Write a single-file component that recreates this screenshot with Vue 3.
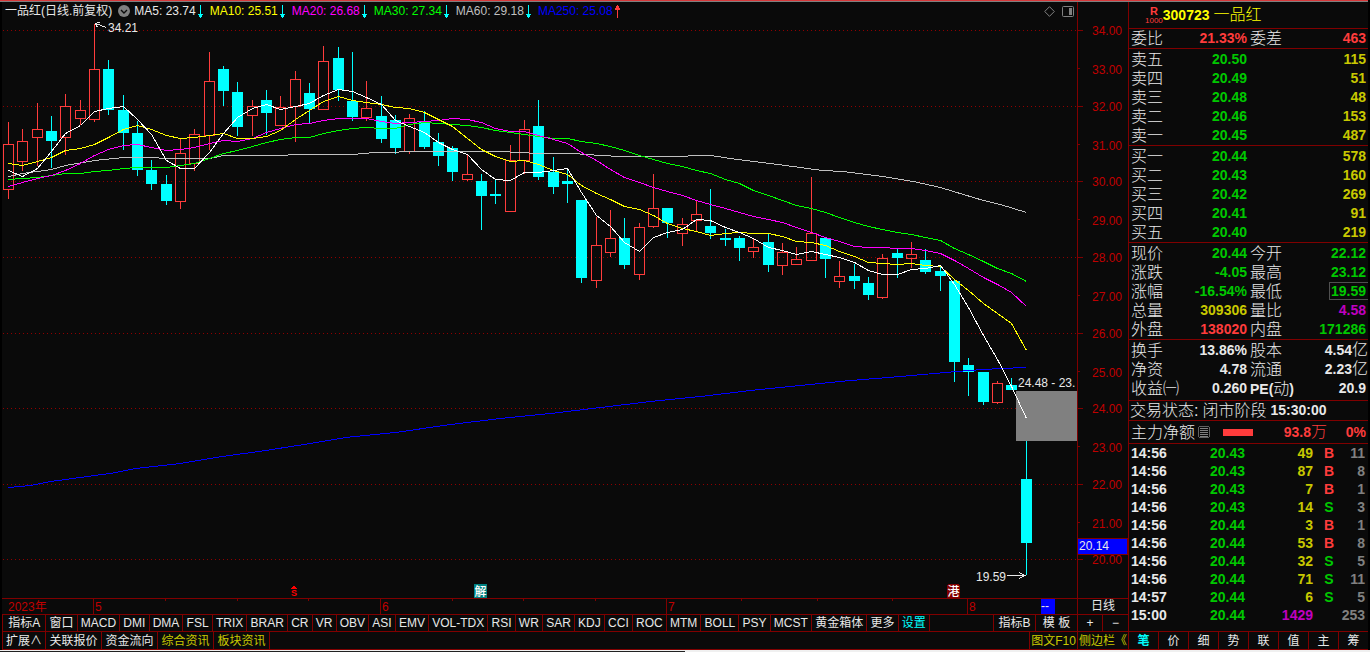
<script setup>
// Each candle: direction (u = up, d = down), high, body top, body bottom, low
const candleData = [
  ['u', 122, 144, 190, 199], ['u', 129, 141, 162, 171], ['u', 103, 129, 138, 166], ['d', 116, 131, 141, 168],
  ['u', 94, 106, 138, 155], ['u', 100, 110, 119, 125], ['u', 24, 69, 120, 122], ['d', 60, 69, 110, 115],
  ['d', 95, 110, 133, 150], ['d', 121, 133, 170, 176], ['d', 160, 170, 184, 190], ['d', 175, 184, 201, 205],
  ['u', 138, 153, 202, 209], ['u', 129, 134, 164, 171], ['u', 52, 81, 136, 150], ['d', 66, 69, 91, 106],
  ['d', 82, 92, 127, 136], ['u', 100, 106, 116, 136], ['d', 90, 100, 113, 135], ['u', 96, 107, 126, 126],
  ['u', 71, 79, 107, 142], ['d', 83, 93, 109, 123], ['u', 46, 61, 110, 110], ['d', 47, 58, 90, 101],
  ['d', 52, 101, 117, 121], ['u', 81, 108, 118, 121], ['d', 96, 116, 139, 143], ['d', 115, 120, 148, 154],
  ['u', 114, 118, 152, 154], ['d', 111, 122, 147, 149], ['d', 133, 142, 156, 166], ['d', 146, 148, 172, 181],
  ['u', 155, 174, 180, 181], ['d', 174, 181, 196, 230], ['d', 179, 194, 196, 204], ['u', 145, 160, 212, 212],
  ['u', 120, 129, 161, 174], ['d', 100, 126, 177, 180], ['d', 157, 172, 187, 194], ['d', 169, 181, 184, 203],
  ['d', 200, 200, 278, 283], ['u', 217, 245, 281, 288], ['u', 210, 238, 253, 257], ['d', 218, 238, 265, 269],
  ['u', 223, 227, 275, 280], ['u', 174, 208, 227, 228], ['d', 208, 208, 223, 238], ['u', 218, 224, 234, 246],
  ['u', 200, 214, 221, 231], ['d', 189, 226, 233, 239], ['d', 229, 238, 240, 246], ['d', 236, 238, 248, 261],
  ['u', 238, 247, 252, 258], ['d', 234, 242, 265, 272], ['u', 243, 252, 266, 275], ['u', 247, 259, 265, 265],
  ['u', 177, 233, 261, 261], ['d', 238, 238, 259, 278], ['u', 261, 276, 282, 288], ['d', 264, 276, 281, 289],
  ['d', 277, 283, 295, 300], ['u', 254, 258, 298, 299], ['d', 249, 253, 258, 278], ['u', 242, 254, 259, 268],
  ['d', 249, 260, 272, 274], ['d', 266, 271, 276, 291], ['d', 279, 281, 362, 382], ['d', 358, 365, 372, 396],
  ['d', 372, 372, 402, 405], ['u', 381, 383, 403, 404], ['d', 378, 385, 390, 390], ['d', 441, 479, 543, 575],
]
const centre = (i) => Math.round(8 + (i * 43) / 3)
const candles = candleData.map(([dir, high, top, bottom, low], i) => ({ dir, high, top, bottom, low, x: centre(i) }))

const linePoints = (ys) => ys.map((y, i) => `${centre(i) + 0.5},${y + 0.5}`).join(' ')
const sparsePoints = (pairs) => pairs.map(([x, y]) => `${x + 0.5},${y + 0.5}`).join(' ')
const ma5 = linePoints([170, 176, 168, 151, 133, 125, 111, 108, 106, 119, 134, 160, 168, 168, 152, 133, 117, 108, 104, 109, 106, 103, 95, 89, 91, 97, 104, 120, 126, 132, 142, 149, 154, 169, 179, 180, 172, 172, 170, 168, 192, 215, 226, 242, 251, 237, 232, 229, 219, 220, 227, 232, 238, 247, 250, 254, 251, 254, 257, 262, 270, 274, 274, 269, 268, 265, 284, 307, 335, 359, 386, 418])
const ma10 = linePoints([163, 165, 161, 157, 150, 148, 144, 137, 129, 125, 129, 135, 138, 137, 135, 133, 138, 138, 136, 130, 119, 110, 101, 96, 100, 102, 104, 107, 108, 112, 119, 126, 138, 149, 156, 161, 160, 164, 170, 174, 185, 193, 199, 206, 209, 215, 223, 228, 231, 235, 233, 232, 233, 233, 236, 241, 242, 245, 251, 256, 262, 263, 264, 263, 265, 266, 279, 290, 303, 313, 323, 350])
const ma20 = linePoints([186, 182, 178, 175, 170, 163, 155, 149, 145, 144, 147, 150, 149, 147, 143, 140, 141, 138, 132, 128, 124, 123, 120, 118, 118, 118, 121, 123, 122, 121, 120, 118, 119, 122, 128, 131, 131, 135, 139, 143, 152, 160, 169, 177, 182, 187, 191, 195, 200, 204, 208, 212, 216, 219, 222, 227, 232, 237, 241, 246, 247, 247, 248, 248, 250, 253, 260, 268, 277, 284, 292, 306])
const ma30 = linePoints([179, 178, 177, 175, 173, 173, 171, 170, 168, 167, 167, 167, 165, 163, 158, 153, 150, 146, 142, 139, 137, 137, 133, 130, 128, 127, 128, 128, 124, 122, 123, 124, 125, 127, 130, 132, 134, 136, 138, 138, 141, 143, 146, 150, 155, 159, 163, 166, 170, 173, 179, 183, 190, 195, 200, 205, 208, 212, 217, 222, 226, 229, 232, 234, 237, 240, 248, 254, 261, 268, 273, 281])
const ma60 = sparsePoints([[8, 176], [22, 173], [51, 169], [65, 165], [94, 160], [123, 157], [151, 157], [165, 158], [209, 158], [223, 155], [280, 155], [295, 154], [352, 154], [374, 152], [424, 151], [500, 151], [538, 153], [572, 153], [600, 155], [620, 156], [680, 156], [696, 155], [710, 155], [737, 159], [785, 165], [822, 170], [843, 171], [882, 176], [913, 181], [940, 187], [953, 191], [983, 200], [1000, 204], [1026, 212]])
const ma250 = sparsePoints([[8, 487], [30, 485], [50, 481], [65, 479], [94, 475], [110, 473], [135, 468], [180, 463], [215, 457], [265, 450], [310, 443], [345, 437], [395, 432], [450, 424], [500, 418], [550, 413], [600, 407], [650, 401], [700, 396], [750, 390], [800, 385], [850, 380], [900, 376], [945, 372], [968, 370], [1000, 368], [1026, 367]])

const prices = [
  ['34.00', 30], ['33.00', 68], ['32.00', 106], ['31.00', 144], ['30.00', 181], ['29.00', 219], ['28.00', 257], ['27.00', 295],
  ['26.00', 333], ['25.00', 371], ['24.00', 408], ['23.00', 446], ['22.00', 484], ['21.00', 522], ['20.00', 559],
].map(([label, y], i) => ({ label, y, major: i % 2 === 0 }))

const months = [[93, '5'], [380, '6'], [666, '7'], [967, '8']]
const weekTicks = [165, 237, 308, 452, 523, 595, 741, 817, 892]

const averages = [
  ['MA5: 23.74', 'white', false], ['MA10: 25.51', 'bright-yellow', false], ['MA20: 26.68', 'bright-magenta', false],
  ['MA30: 27.34', 'bright-green', false], ['MA60: 29.18', 'silver', false], ['MA250: 25.08', 'blue', true],
]

const indicators = ['窗口', 'MACD', 'DMI', 'DMA', 'FSL', 'TRIX', 'BRAR', 'CR', 'VR', 'OBV', 'ASI', 'EMV', 'VOL-TDX', 'RSI', 'WR', 'SAR', 'KDJ', 'CCI', 'ROC', 'MTM', 'BOLL', 'PSY', 'MCST', '黄金箱体', '更多']

const sells = [['卖五', '20.50', '115'], ['卖四', '20.49', '51'], ['卖三', '20.48', '48'], ['卖二', '20.46', '153'], ['卖一', '20.45', '487']]
const buys = [['买一', '20.44', '578'], ['买二', '20.43', '160'], ['买三', '20.42', '269'], ['买四', '20.41', '91'], ['买五', '20.40', '219']]
const stats = [
  ['现价', '20.44', 'green', '今开', '22.12', 'green'],
  ['涨跌', '-4.05', 'green', '最高', '23.12', 'green'],
  ['涨幅', '-16.54%', 'green', '最低', '19.59', 'green boxed'],
  ['总量', '309306', 'yellow', '量比', '4.58', 'magenta'],
  ['外盘', '138020', 'red', '内盘', '171286', 'green'],
]
const trades = [
  ['14:56', '20.43', '49', 'B', '11'], ['14:56', '20.43', '87', 'B', '8'], ['14:56', '20.43', '7', 'B', '1'],
  ['14:56', '20.43', '14', 'S', '3'], ['14:56', '20.44', '3', 'B', '1'], ['14:56', '20.44', '53', 'B', '8'],
  ['14:56', '20.44', '32', 'S', '5'], ['14:56', '20.44', '71', 'S', '11'], ['14:57', '20.44', '6', 'S', '5'],
  ['15:00', '20.44', '1429', '', '253'],
]
const tabs = ['笔', '价', '细', '势', '联', '值', '主', '筹']
</script>

<template>
  <div class="app" lang="zh-CN">
    <div class="topline"></div>
    <div class="main">
      <main class="left">
        <header class="chart-head">
          <div class="legend">
            <h1>一品红(日线.前复权)</h1>
            <button class="icon-btn toggle" type="button" aria-label="展开">
              <svg width="12" height="12" viewBox="0 0 12 12"><circle cx="6" cy="6" r="6" fill="#808080" /><path d="M3 5l3 3 3-3" fill="none" stroke="#0a0a0a" stroke-width="1.4" /></svg>
            </button>
            <span v-for="[text, tone, up] in averages" :key="text" class="avg" :class="tone">
              {{ text }}
              <svg v-if="up" width="5" height="13" viewBox="0 0 5 13" shape-rendering="crispEdges"><path d="M2 0h1v13h-1zM1 1h3v2h-3zM0 3h5v2h-5z" fill="#ff3c3c" /></svg>
              <svg v-else width="5" height="13" viewBox="0 0 5 13" shape-rendering="crispEdges"><path d="M2 0h1v13h-1zM0 9h5v1h-5zM1 10h3v2h-3z" fill="#00ffff" /></svg>
            </span>
            <span class="spacer"></span>
            <button class="icon-btn" type="button" aria-label="标记">
              <svg width="11" height="11" viewBox="0 0 11 11"><path d="M5.500 .7L10.300 5.500 5.500 10.300 .7 5.500z" fill="none" stroke="#808080" /></svg>
            </button>
            <button class="icon-btn panel-toggle" type="button" aria-label="侧栏">
              <svg width="12" height="11" viewBox="0 0 12 11"><rect x=".5" y=".5" width="11" height="10" rx="1" fill="none" stroke="#808080" /><rect x="7" y="2" width="3" height="7" fill="#808080" /></svg>
            </button>
          </div>
          <div class="axis-head"></div>
        </header>

        <svg class="plot" viewBox="2 20 1126 578" preserveAspectRatio="xMaxYMin meet" role="img" aria-label="日线图">
          <g shape-rendering="crispEdges">
            <template v-for="p in prices" :key="p.label">
              <line v-if="p.major" x1="3" x2="1077" :y1="p.y + 0.5" :y2="p.y + 0.5" class="grid" />
              <rect x="1078" :y="p.y" :width="p.major ? 5 : 2" height="1" fill="#800000" />
            </template>
            <rect x="1077" y="20" width="1" height="578" fill="#800000" />

            <g v-for="c in candles" :key="c.x">
              <template v-if="c.dir === 'd'">
                <rect :x="c.x" :y="c.high" width="1" :height="c.low - c.high" fill="#00ffff" />
                <rect :x="c.x - 5" :y="c.top" width="11" :height="c.bottom - c.top" fill="#00ffff" />
              </template>
              <template v-else>
                <rect :x="c.x" :y="c.high" width="1" :height="c.top - c.high" fill="#ff3c3c" />
                <rect :x="c.x" :y="c.bottom" width="1" :height="c.low - c.bottom" fill="#ff3c3c" />
                <rect :x="c.x - 4.5" :y="c.top + 0.5" width="10" :height="c.bottom - c.top - 1" fill="none" stroke="#ff3c3c" />
              </template>
            </g>
            <rect x="1016" y="391" width="61" height="50" fill="#808080" />
            <g fill="none">
              <polyline :points="ma60" stroke="#c0c0c0" />
              <polyline :points="ma250" stroke="#0000ff" />
              <polyline :points="ma30" stroke="#00ff00" />
              <polyline :points="ma20" stroke="#ff00ff" />
              <polyline :points="ma10" stroke="#ffff00" />
              <polyline :points="ma5" stroke="#ffffff" />
              <path d="M95.500 23.500l11 4M95.500 23.500l4 -1.500M95.500 23.500l2 4M1007 575.500h18M1019 572.500l6 3-6 3" stroke="#e8e8e8" />
            </g>
            <rect x="474" y="584" width="13" height="14" fill="#008080" />
            <path d="M947 585l1-1h10l2 2v12h-13z" fill="#800000" />
            <path d="M293 586h2v1h1v1h1v1h-6v-1h1v-1h1z" fill="#ff0000" />
          </g>
          <text x="294" y="596" class="mark-s">S</text>
          <text x="480.500" y="596" class="mark">解</text>
          <text x="953.500" y="596" class="mark">港</text>
          <text x="108" y="32" class="note">34.21</text>
          <text x="976" y="581" class="note">19.59</text>
          <text x="1018" y="387" class="note">24.48 - 23.</text>
          <text v-for="p in prices" :key="p.label" x="1122" :y="p.y + (p.major ? 5 : 6)" class="price">{{ p.label }}</text>
          <g shape-rendering="crispEdges">
            <rect x="1077" y="538" width="51" height="17" fill="#800000" />
            <rect x="1078" y="539" width="49" height="15" fill="#0000ff" />
          </g>
          <text x="1079" y="550" class="note">20.14</text>
        </svg>

        <div class="time-row">
          <svg class="time-axis" viewBox="2 599 1075 15" preserveAspectRatio="xMaxYMin meet">
            <g shape-rendering="crispEdges" fill="#800000">
              <rect v-for="[x] in months" :key="x" :x="x" y="599" width="1" height="15" />
              <rect v-for="x in weekTicks" :key="x" :x="x" y="599" width="1" height="2" />
              <rect x="1041" y="599" width="14" height="15" fill="#0000ff" />
            </g>
            <text x="8" y="611" class="month">2023年</text>
            <text v-for="[x, label] in months" :key="label" :x="x + 2" y="611" class="month">{{ label }}</text>
            <text x="1041" y="610" class="note">--</text>
          </svg>
          <button class="period" type="button">日线</button>
        </div>

        <nav class="strip indicators">
          <div class="ind-list">
            <button class="lead" type="button">指标A</button>
            <button v-for="name in indicators" :key="name" type="button">{{ name }}</button>
            <button class="cyan" type="button">设置</button>
          </div>
          <span class="spacer"></span>
          <div class="ind-tools">
            <button class="wide" type="button">指标B</button>
            <button class="wide" type="button">模 板</button>
            <button class="zoom" type="button" aria-label="放大">+</button>
            <button class="zoom" type="button" aria-label="缩小">−</button>
          </div>
        </nav>

        <nav class="strip links">
          <button class="wide" type="button">扩展∧</button>
          <button type="button">关联报价</button>
          <button type="button">资金流向</button>
          <button class="yellow" type="button">综合资讯</button>
          <button class="yellow" type="button">板块资讯</button>
          <span class="spacer"></span>
          <button class="yellow f10" type="button">图文F10</button>
          <button class="yellow side" type="button">侧边栏《</button>
        </nav>
      </main>

      <aside class="panel">
        <header class="stock">
          <span class="badge"><b>R</b><small>1000</small></span>
          <h2>300723 <span>一品红</span></h2>
        </header>
        <table class="quote flush">
          <colgroup><col class="c1" /><col class="c2" /><col class="c3" /><col /></colgroup>
          <tbody><tr><th>委比</th><td class="red">21.33%</td><th>委差</th><td class="red">463</td></tr></tbody>
        </table>
        <table v-for="(rows, k) in [sells, buys]" :key="k" class="quote">
          <colgroup><col class="c1" /><col class="c2" /><col /></colgroup>
          <tbody>
            <tr v-for="[name, price, vol] in rows" :key="name"><th>{{ name }}</th><td class="green">{{ price }}</td><td class="yellow">{{ vol }}</td></tr>
          </tbody>
        </table>
        <table class="quote">
          <colgroup><col class="c1" /><col class="c2" /><col class="c3" /><col /></colgroup>
          <tbody>
            <tr v-for="[a, av, at, b, bv, bt] in stats" :key="a"><th>{{ a }}</th><td :class="at">{{ av }}</td><th>{{ b }}</th><td :class="bt"><span>{{ bv }}</span></td></tr>
          </tbody>
        </table>
        <table class="quote facts">
          <colgroup><col class="c1" /><col class="c2" /><col class="c3" /><col /></colgroup>
          <tbody>
            <tr><th>换手</th><td>13.86%</td><th>股本</th><td>4.54<i>亿</i></td></tr>
            <tr><th>净资</th><td>4.78</td><th>流通</th><td>2.23<i>亿</i></td></tr>
            <tr><th>收益㈠</th><td>0.260</td><th><b>PE(</b>动<b>)</b></th><td>20.9</td></tr>
          </tbody>
        </table>
        <div class="status"><span>交易状态:</span><span>闭市阶段</span><b>15:30:00</b></div>
        <div class="flow">
          <span>主力净额</span>
          <svg width="12" height="12" viewBox="0 0 12 12" shape-rendering="crispEdges"><path d="M1 0h10v1h1v10h-1v1h-10v-1h-1v-10h1z" fill="#606060" /><path d="M1 1h10v10h-10z" fill="#0a0a0a" /><path d="M2 2h8v1h-8zM2 4h8v1h-8zM2 6h8v1h-8zM2 8h8v1h-8zM2 10h8v1h-8z" fill="#808080" /></svg>
          <span class="bar"></span>
          <span class="amount red"><b>93.8</b>万</span>
          <b class="pct red">0%</b>
        </div>
        <table class="trades">
          <colgroup><col class="t1" /><col class="t2" /><col class="t3" /><col class="t4" /><col /></colgroup>
          <tbody>
            <tr v-for="([time, price, vol, side, n], i) in trades" :key="i">
              <td class="time">{{ time }}</td><td class="green">{{ price }}</td>
              <td :class="side ? 'yellow' : 'magenta'">{{ vol }}</td>
              <td class="bs" :class="side === 'B' ? 'red' : 'green'">{{ side }}</td><td class="count">{{ n }}</td>
            </tr>
          </tbody>
        </table>
        <nav class="tabs"><button v-for="(t, i) in tabs" :key="t" type="button" :class="{ active: i === 0 }">{{ t }}</button></nav>
      </aside>
    </div>
    <div class="footline"><span></span></div>
  </div>
</template>

<style>
body { margin: 0; background: #000; }
</style>

<style scoped>
.app {
  display: flex; flex-direction: column; min-height: 100vh; background: #000; color: #e8e8e8;
  font: 12px/15px "Liberation Sans", "Noto Sans CJK SC", sans-serif;
}
.app * { box-sizing: border-box; }
.topline { height: 2px; margin-right: 2px; background: #d8383a; border-bottom: 1px solid #808080; }
.main { flex: 1; display: flex; padding: 0 2px; }
.left { flex: 1; min-width: 0; display: flex; flex-direction: column; background: #0a0a0a; }
h1, h2 { margin: 0; font-size: inherit; font-weight: 400; }
button { margin: 0; padding: 0; border: 0; background: none; color: inherit; font: inherit; white-space: nowrap; cursor: pointer; }
svg { display: block; }

.chart-head { display: flex; height: 18px; }
.legend { flex: 1; display: flex; align-items: center; min-width: 0; padding: 0 3px; white-space: nowrap; border-right: 1px solid #800000; }
.axis-head { width: 50px; }
.icon-btn { flex: none; }
.toggle { margin: 0 4px 0 6px; }
.panel-toggle { margin-left: 7px; }
.avg { display: flex; align-items: center; gap: 2px; margin-right: 7px; }
.spacer { flex: 1; }

.plot { flex: 1; width: 100%; min-height: 0; }
.grid { stroke: #900000; stroke-dasharray: 1 3; }
.note { fill: #e8e8e8; font-size: 12px; }
.price { fill: #c00000; font-size: 12px; text-anchor: end; }
.month { fill: #c00000; font-size: 12px; }
.mark { fill: #fff; font-size: 12px; font-weight: 500; text-anchor: middle; }
.mark-s { fill: #ff0000; font-size: 9px; font-weight: 700; text-anchor: middle; }

.time-row { display: flex; height: 17px; border: solid #800000; border-width: 1px 0; }
.time-axis { flex: 1; min-width: 0; height: 15px; }
.period { width: 51px; border-left: 1px solid #800000; }

.strip { display: flex; border: solid #800000; border-width: 0 0 1px 1px; }
.strip button { border-right: 1px solid #800000; }
.indicators { height: 17px; line-height: 16px; }
.ind-list { flex: 0 1 927px; display: flex; }
.ind-list button { flex: 1 1 auto; padding: 0 2px; }
.ind-list .lead { padding: 0 4px; }
.ind-tools { display: flex; border-left: 1px solid #800000; }
.wide { width: 42px; }
.zoom { width: 25px; }
.strip .zoom:last-child, .strip .side { border-right: 0; }
.links { height: 18px; line-height: 15px; }
.links button { width: 56px; padding-top: 2px; }
.links .wide { width: 43px; }
.links .f10 { width: 49px; border-left: 1px solid #800000; }
.links .side { width: 50px; }

.panel { flex: none; width: 240px; display: flex; flex-direction: column; background: #0a0a0a; border-left: 1px solid #800000; font-size: 16px; line-height: 19px; font-weight: 300; }
.panel b { font-size: 14px; font-weight: 700; }
.stock { display: flex; align-items: center; height: 27px; padding-left: 16px; border-bottom: 1px solid #800000; color: #ffff00; }
.stock h2 { font-size: 14px; font-weight: 700; }
.stock h2 span { font-size: 16px; font-weight: 300; }
.badge { display: flex; flex-direction: column; align-items: center; color: #ff3c3c; }
.stock .badge b { font-size: 11px; line-height: 10px; }
.badge small { font-size: 8px; line-height: 9px; font-weight: 400; }
.quote, .trades { width: 100%; table-layout: fixed; border-collapse: separate; border-spacing: 0; }
.quote { padding-top: 1px; border-bottom: 1px solid #800000; }
.flush { padding-top: 0; }
.facts { padding: 1px 0 2px; }
.c1 { width: 50px; }
.c2 { width: 68px; }
.c3 { width: 46px; }
.quote tr { height: 19px; }
th, td { padding: 0; white-space: nowrap; }
.quote th { padding-left: 2px; height: 19px; font-weight: 300; text-align: left; line-height: 19px; }
.quote th:nth-child(3) { padding-left: 3px; }
td { font-size: 14px; font-weight: 700; text-align: right; line-height: 19px; }
.quote td { height: 19px; }
.quote td:last-child { padding-right: 2px; }
.quote .boxed:last-child { padding-right: 0; }
.boxed span { display: inline-block; height: 18px; line-height: 17px; padding: 0 2px 0 1px; border: 1px solid #505050; border-right: 0; vertical-align: top; }
td i { font-size: 16px; font-style: normal; font-weight: 300; line-height: 1px; }
.facts b { line-height: 1px; }
.facts tr:nth-child(-n+2) td:last-child { padding-right: 0; }
.status { display: flex; gap: 4px; height: 20px; padding-left: 1px; border-bottom: 1px solid #800000; white-space: nowrap; }
.flow { display: flex; align-items: center; height: 23px; padding: 0 2px; border-bottom: 1px solid #800000; white-space: nowrap; }
.flow svg { margin-left: 3px; }
.bar { width: 30px; height: 7px; margin-left: 13px; background: #ff3c3c; }
.amount { flex: 1; text-align: right; }
.pct { width: 39px; text-align: right; }
.trades { flex: none; margin-bottom: auto; }
.trades td { height: 18px; line-height: 18px; }
.t1 { width: 50px; }
.t2 { width: 66px; }
.t3 { width: 68px; }
.t4 { width: 28px; }
.trades .time { padding-left: 2px; text-align: left; }
.trades .bs { padding-left: 4px; text-align: center; }
.trades .count { padding-right: 3px; color: #808080; }
.tabs { display: flex; height: 19px; border: solid #800000; border-width: 1px 0; }
.tabs button { flex: 1; padding-top: 2px; border-right: 1px solid #800000; font-size: 12px; line-height: 15px; font-weight: 400; }
.tabs button:last-child { border-right: 0; }
.tabs .active { color: #00ffff; font-weight: 700; }

.footline { height: 2px; background: #f0f0f0; padding-top: 1px; }
.footline span { display: block; width: 50%; height: 1px; background: #222; }

.red { color: #ff3c3c; }
.green { color: #00c800; }
.yellow { color: #c8c800; }
.magenta { color: #c000c0; }
.cyan { color: #00ffff; }
.white { color: #e8e8e8; }
.bright-yellow { color: #ffff00; }
.bright-magenta { color: #ff00ff; }
.bright-green { color: #00ff00; }
.silver { color: #c0c0c0; }
.blue { color: #0000ff; }
</style>
